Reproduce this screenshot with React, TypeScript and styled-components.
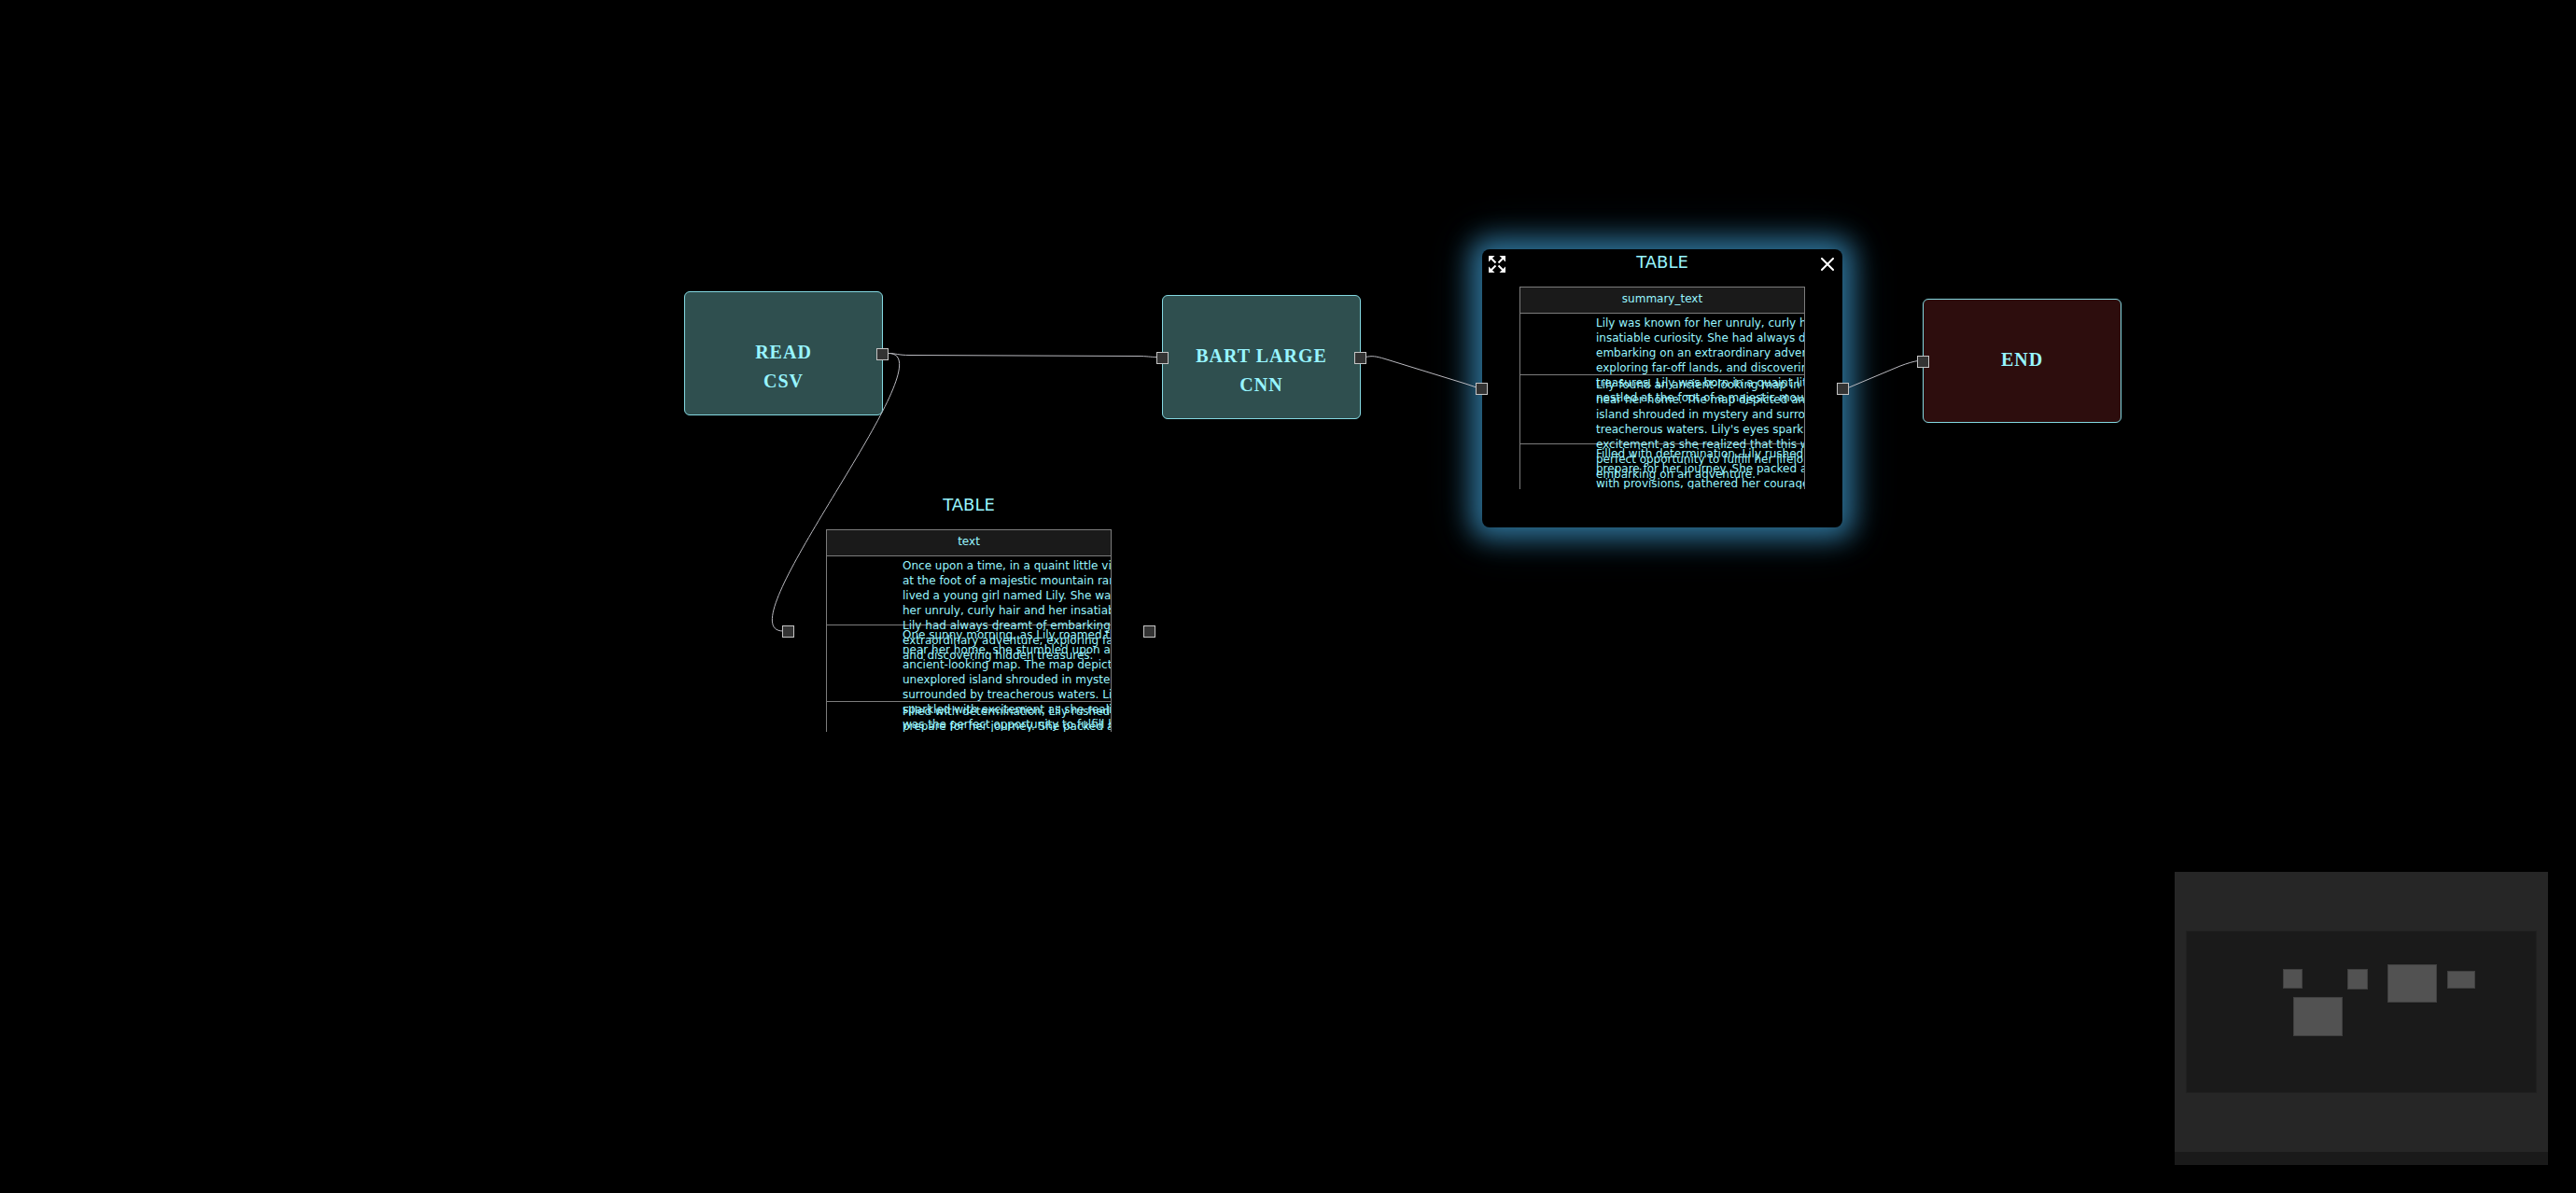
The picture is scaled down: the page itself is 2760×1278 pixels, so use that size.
import React from "react";
import styled, { createGlobalStyle } from "styled-components";

const GlobalStyle = createGlobalStyle`
  * { box-sizing: border-box; }
  html, body, #root { height: 100%; }
  body { margin: 0; background: #000; overflow: hidden; }
`;

const accent = "#98f5ff";

const Canvas = styled.main`
  position: relative;
  width: 100%;
  height: 100%;
  min-height: 100vh;
  overflow: hidden;
  background: #000;
  color: ${accent};
  font-family: "DejaVu Sans", sans-serif;
`;

const Edges = styled.svg`
  position: absolute;
  inset: 0;
  width: 100%;
  height: 100%;
  pointer-events: none;
  fill: none;
  stroke: #b9b9bf;
  stroke-width: 1;
`;

const Placed = styled.div<{ $x: number; $y: number }>`
  position: absolute;
  left: ${(p) => p.$x}px;
  top: ${(p) => p.$y}px;
`;

const StepNode = styled(Placed)<{ $tone: string }>`
  display: flex;
  justify-content: center;
  width: 213px;
  height: 133px;
  padding: 49px 32px 0;
  border: 1px solid #84d9e2;
  border-radius: 6px;
  background: ${(p) => p.$tone};
`;

const StepTitle = styled.h2`
  margin: 0;
  font: bold 20px/31px "Liberation Serif", serif;
  letter-spacing: 1px;
  text-align: center;
  text-transform: uppercase;
  white-space: pre-line;
`;

const Handle = styled.span<{ $side: "left" | "right" }>`
  position: absolute;
  top: 50%;
  ${(p) => p.$side}: -7px;
  width: 13px;
  height: 13px;
  margin-top: -6px;
  border: 1px solid #c4c4c4;
  background: #333;
`;

const TableNode = styled(Placed)<{ $selected?: boolean }>`
  width: 386px;
  height: 298px;
  padding: 0 40px;
  border-radius: 8px;
  background: #000;
  box-shadow: ${(p) =>
    p.$selected
      ? "0 0 28px 11px #2d6f94, 0 0 48px 14px rgba(45, 111, 148, 0.25)"
      : "none"};
`;

const TableTitle = styled.h3`
  margin: 0;
  height: 40px;
  padding-top: 4px;
  font-size: 18px;
  font-weight: 400;
  line-height: 20px;
  text-align: center;
`;

const Grid = styled.div`
  height: 217px;
  overflow: hidden;
  border: 1px solid #7c7c7c;
  border-bottom: 0;
`;

const Table = styled.table`
  display: block;
  font-size: 12px;
  line-height: 16px;

  thead, tbody, tr, th, td { display: block; }
`;

const HeaderCell = styled.th`
  height: 28px;
  padding-top: 4px;
  border-bottom: 1px solid #7c7c7c;
  background: #1a1a1a;
  font-weight: 400;
  text-align: center;
`;

const Row = styled.tr<{ $lines: number }>`
  height: ${(p) => p.$lines * 8 + 18}px;
  border-bottom: 1px solid #7c7c7c;

  &:last-child { border-bottom: 0; }
`;

const Cell = styled.td`
  padding: 2px 0 0 81px;
  white-space: pre;
`;

const IconButton = styled.button<{ $side: "left" | "right" }>`
  position: absolute;
  top: 6px;
  ${(p) => p.$side}: 6px;
  display: grid;
  place-items: center;
  width: 20px;
  height: 20px;
  padding: 0;
  border: 0;
  background: none;
  color: #fff;
  cursor: pointer;
`;

const MiniMap = styled.aside`
  position: absolute;
  right: 30px;
  bottom: 30px;
  width: 400px;
  padding-bottom: 14px;
  background: #1a1a1a;

  svg { display: block; width: 100%; }
`;

const ExpandIcon = () => (
  <svg width="18" height="18" viewBox="0 0 18 18" fill="currentColor" stroke="currentColor" strokeWidth="2">
    <path stroke="none" d="M0 0h6.500L0 6.500zM18 0v6.500L11.500 0zM0 18v-6.500L6.500 18zM18 18h-6.500L18 11.500z" />
    <path d="M2 2l5.500 5.500M16 2l-5.500 5.500M2 16l5.500-5.500M16 16l-5.500-5.500" />
  </svg>
);

const CloseIcon = () => (
  <svg width="14" height="14" viewBox="0 0 14 14" stroke="currentColor" strokeWidth="2" strokeLinecap="round">
    <path d="M1 1l12 12M13 1L1 13" />
  </svg>
);

type TableProps = {
  x: number;
  y: number;
  column: string;
  rows: string[][];
  selected?: boolean;
};

const TableBox = ({ x, y, column, rows, selected }: TableProps) => (
  <TableNode $x={x} $y={y} $selected={selected}>
    <TableTitle>TABLE</TableTitle>
    <Grid>
      <Table>
        <thead>
          <tr>
            <HeaderCell scope="col">{column}</HeaderCell>
          </tr>
        </thead>
        <tbody>
          {rows.map((lines) => (
            <Row key={lines[0]} $lines={lines.length}>
              <Cell>{lines.join("\n")}</Cell>
            </Row>
          ))}
        </tbody>
      </Table>
    </Grid>
    {selected && (
      <>
        <IconButton $side="left" aria-label="Expand">
          <ExpandIcon />
        </IconButton>
        <IconButton $side="right" aria-label="Close">
          <CloseIcon />
        </IconButton>
      </>
    )}
    <Handle $side="left" />
    <Handle $side="right" />
  </TableNode>
);

const storyRows = [
  [
    "Once upon a time, in a quaint little village nestled",
    "at the foot of a majestic mountain range, there",
    "lived a young girl named Lily. She was known for",
    "her unruly, curly hair and her insatiable curiosity.",
    "Lily had always dreamt of embarking on an",
    "extraordinary adventure, exploring far-off lands,",
    "and discovering hidden treasures.",
  ],
  [
    "One sunny morning, as Lily roamed the forest",
    "near her home, she stumbled upon an",
    "ancient-looking map. The map depicted an",
    "unexplored island shrouded in mystery and",
    "surrounded by treacherous waters. Lily's eyes",
    "sparkled with excitement as she realized that this",
    "was the perfect opportunity to fulfill her",
    "lifelong dream.",
  ],
  [
    "Filled with determination, Lily rushed home to",
    "prepare for her journey. She packed a bag",
    "with provisions, gathered her courage,",
  ],
];

const summaryRows = [
  [
    "Lily was known for her unruly, curly hair and",
    "insatiable curiosity. She had always dreamt of",
    "embarking on an extraordinary adventure,",
    "exploring far-off lands, and discovering hidden",
    "treasures. Lily was born in a quaint little village",
    "nestled at the foot of a majestic mountain range.",
  ],
  [
    "Lily found an ancient-looking map in the forest",
    "near her home. The map depicted an unexplored",
    "island shrouded in mystery and surrounded by",
    "treacherous waters. Lily's eyes sparkled with",
    "excitement as she realized that this was the",
    "perfect opportunity to fulfill her lifelong dream of",
    "embarking on an adventure.",
  ],
  [
    "Filled with determination, Lily rushed home to",
    "prepare for her journey. She packed a bag",
    "with provisions, gathered her courage,",
  ],
];

export default function App() {
  return (
    <>
      <GlobalStyle />
      <Canvas>
        <StepNode $x={733} $y={312} $tone="#2f4f4f">
          <StepTitle>{"Read\nCSV"}</StepTitle>
          <Handle $side="right" />
        </StepNode>
        <StepNode $x={1245} $y={316} $tone="#2f4f4f">
          <StepTitle>{"Bart Large\nCNN"}</StepTitle>
          <Handle $side="left" />
          <Handle $side="right" />
        </StepNode>
        <TableBox x={845} y={527} column="text" rows={storyRows} />
        <TableBox x={1588} y={267} column="summary_text" rows={summaryRows} selected />
        <StepNode $x={2060} $y={320} $tone="#2d0d0d">
          <StepTitle>End</StepTitle>
          <Handle $side="left" />
        </StepNode>
        <Edges>
          <path d="M952 378.500C960 378.500 962 380.500 975 380.500L1218 381.500C1230 381.500 1232 382.500 1239 382.500" />
          <path d="M952 378.500C1019 378.500 772 676 839 676" />
          <path d="M1463 382.500C1470 381 1474 381.500 1484 384.500L1570 411Q1576 413 1582 415" />
          <path d="M1980 415.500L2036 392Q2048 387.500 2055 386.500" />
        </Edges>
        <MiniMap aria-label="Mini map">
          <svg viewBox="0 0 400 300">
            <path fill="#262626" d="M0 0h400v300H0z" />
            <path fill="#1a1a1a" stroke="#202020" d="M12.500 63.500h375v173h-375z" />
            <g fill="#525252" stroke="#404040">
              <rect x="116.500" y="104.500" width="20" height="20" />
              <rect x="185.500" y="104.500" width="21" height="21" />
              <rect x="228.500" y="99.500" width="52" height="40" />
              <rect x="292.500" y="106.500" width="29" height="18" />
              <rect x="127.500" y="134.500" width="52" height="41" />
            </g>
          </svg>
        </MiniMap>
      </Canvas>
    </>
  );
}
